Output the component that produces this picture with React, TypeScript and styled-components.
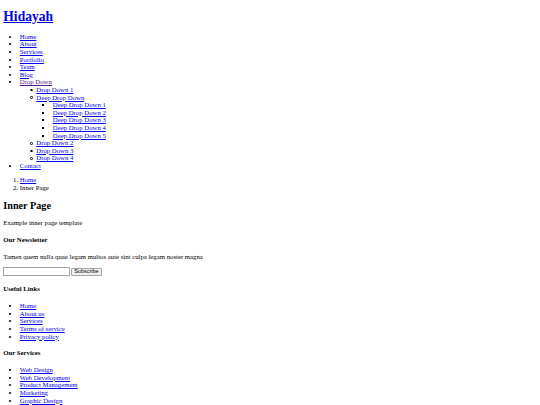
import React from "react"
import styled, { createGlobalStyle } from "styled-components"

// The reference is a bare, unstyled page shown at about 41% size,
// so every browser default below is scaled by the same factor.
const GlobalStyle = createGlobalStyle`
  html, body {
    margin: 0;
    padding: 0;
    background: #ffffff;
    overflow: hidden;
  }
`

const Page = styled.div`
  margin: 3.3px;
  font-family: "Liberation Serif", "Times New Roman", serif;
  font-size: 6.75px;
  line-height: 7.59px;
  color: #000000;
`

const Link = styled.a<{ $visited?: boolean }>`
  color: ${(p) => (p.$visited ? "#551a8b" : "#0000ee")};
  text-decoration: underline;
  cursor: pointer;
`

const SiteTitle = styled.h1`
  font-size: 13.6px;
  line-height: 15.18px;
  font-weight: bold;
  margin: 8.84px 0;
`

const List = styled.ul`
  margin: 6.6px 0;
  padding-left: 16.5px;
  list-style-type: disc;
`

const SubList = styled.ul`
  margin: 0;
  padding-left: 16.5px;
  list-style-type: square;
`

// small font sizes render the native circle marker as a dot, so draw it
const CircleList = styled.ul`
  margin: 0;
  padding-left: 16.5px;
  list-style: none;

  & > li::before {
    content: "";
    display: inline-block;
    box-sizing: border-box;
    width: 2.6px;
    height: 2.6px;
    margin: 0 3.7px 0 -6.3px;
    border: 0.6px solid #000000;
    border-radius: 50%;
    vertical-align: 0.6px;
  }
`

const Crumbs = styled.ol`
  margin: 6.6px 0;
  padding-left: 16.5px;
  list-style-type: decimal;
`

const PageTitle = styled.h2`
  font-size: 10.2px;
  line-height: 11.39px;
  font-weight: bold;
  margin: 8.2px 0;
`

const Text = styled.p`
  margin: 6.6px 0;
`

const SectionTitle = styled.h4`
  font-size: 6.75px;
  line-height: 7.59px;
  font-weight: bold;
  margin: 9.2px 0;
`

const Form = styled.form`
  margin: 0;
  display: flex;
  align-items: flex-start;
  height: 9.4px;
`

const EmailInput = styled.input`
  box-sizing: border-box;
  width: 67px;
  height: 8.6px;
  margin: 0.6px 0 0;
  padding: 0 1px;
  border: 1px solid #a3a3a3;
  border-radius: 0.5px;
  background: #ffffff;
  font-family: "Liberation Sans", Arial, sans-serif;
  font-size: 5.5px;
`

const SubmitButton = styled.button`
  box-sizing: border-box;
  height: 8.4px;
  margin: 0.8px 0 0 0.5px;
  padding: 0 2.4px;
  border: 1px solid #a3a3a3;
  border-radius: 1px;
  background: #efefef;
  color: #000000;
  font-family: "Liberation Sans", Arial, sans-serif;
  font-size: 5.5px;
  line-height: 1;
`

const nav = ["Home", "About", "Services", "Portfolio", "Team", "Blog"]
const deep = ["Deep Drop Down 1", "Deep Drop Down 2", "Deep Drop Down 3", "Deep Drop Down 4", "Deep Drop Down 5"]
const usefulLinks = ["Home", "About us", "Services", "Terms of service", "Privacy policy"]
const services = ["Web Design", "Web Development", "Product Management", "Marketing", "Graphic Design"]

export default function App() {
  return (
    <>
      <GlobalStyle />
      <Page>
        <header>
          <SiteTitle>
            <Link href="#">Hidayah</Link>
          </SiteTitle>
          <nav>
            <List>
              {nav.map((item) => (
                <li key={item}>
                  <Link href="#">{item}</Link>
                </li>
              ))}
              <li>
                <Link href="#" $visited>
                  Drop Down
                </Link>
                <CircleList>
                  <li>
                    <Link href="#">Drop Down 1</Link>
                  </li>
                  <li>
                    <Link href="#">Deep Drop Down</Link>
                    <SubList>
                      {deep.map((item) => (
                        <li key={item}>
                          <Link href="#">{item}</Link>
                        </li>
                      ))}
                    </SubList>
                  </li>
                  {["Drop Down 2", "Drop Down 3", "Drop Down 4"].map((item) => (
                    <li key={item}>
                      <Link href="#">{item}</Link>
                    </li>
                  ))}
                </CircleList>
              </li>
              <li>
                <Link href="#">Contact</Link>
              </li>
            </List>
          </nav>
        </header>

        <main>
          <Crumbs>
            <li>
              <Link href="#">Home</Link>
            </li>
            <li>Inner Page</li>
          </Crumbs>
          <PageTitle>Inner Page</PageTitle>
          <Text>Example inner page template</Text>
        </main>

        <footer>
          <SectionTitle>Our Newsletter</SectionTitle>
          <Text>Tamen quem nulla quae legam multos aute sint culpa legam noster magna</Text>
          <Form onSubmit={(e) => e.preventDefault()}>
            <EmailInput type="email" name="email" />
            <SubmitButton type="submit">Subscribe</SubmitButton>
          </Form>

          <SectionTitle>Useful Links</SectionTitle>
          <List>
            {usefulLinks.map((item) => (
              <li key={item}>
                <Link href="#">{item}</Link>
              </li>
            ))}
          </List>

          <SectionTitle>Our Services</SectionTitle>
          <List>
            {services.map((item) => (
              <li key={item}>
                <Link href="#">{item}</Link>
              </li>
            ))}
          </List>
        </footer>
      </Page>
    </>
  )
}
